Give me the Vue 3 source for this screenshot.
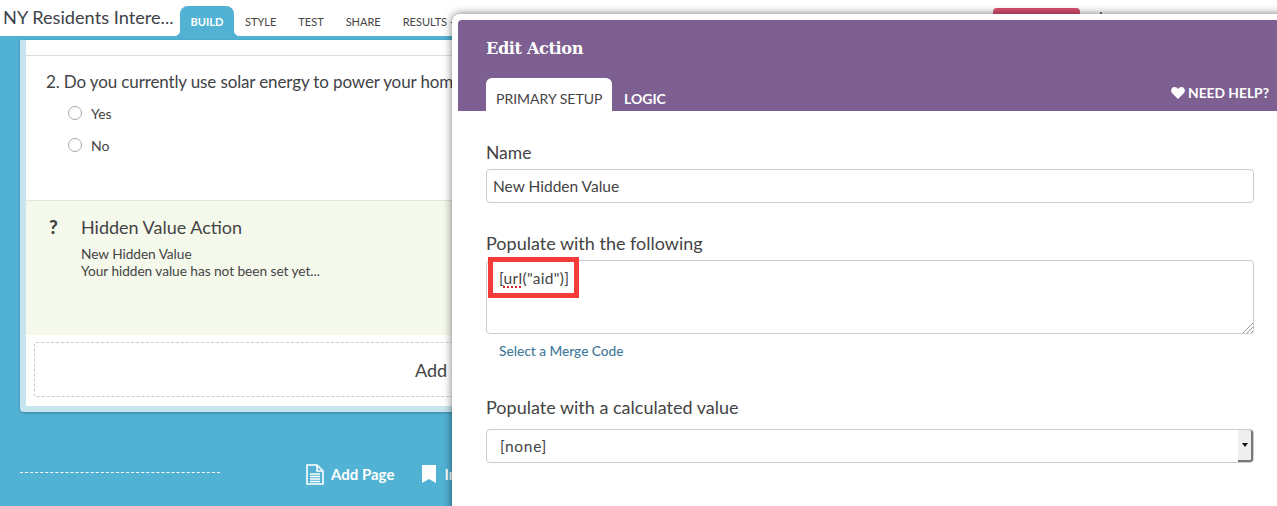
<script setup>
const nav = ['STYLE', 'TEST', 'SHARE', 'RESULTS']
</script>

<template>
  <div class="page">
    <header class="top">
      <div class="title">NY Residents Intere...</div>
      <nav class="nav">
        <span class="tab on">BUILD</span>
        <span v-for="n in nav" :key="n" class="tab">{{ n }}</span>
        <span class="caret">-</span>
      </nav>
      <div class="pink"></div>
      <svg class="gear" width="8" height="8" viewBox="0 0 8 8"><path d="M3 0h2v2h3v6H0V2h3z" fill="#777"/></svg>
    </header>

    <main class="card">
      <div class="inner">
        <div class="spacer"></div>
        <section class="question">
          <div class="qtext">2. Do you currently use solar energy to power your home?</div>
          <label class="opt"><i class="radio"></i>Yes</label>
          <label class="opt"><i class="radio"></i>No</label>
        </section>
        <section class="action">
          <div class="mark">?</div>
          <div>
            <div class="ahead">Hidden Value Action</div>
            <div class="aline first">New Hidden Value</div>
            <div class="aline">Your hidden value has not been set yet...</div>
          </div>
        </section>
        <div class="addwrap">
          <div class="addbox">Add Question</div>
        </div>
      </div>
    </main>

    <footer class="foot">
      <div class="dash"></div>
      <div class="flink first">
        <svg width="18" height="21" viewBox="0 0 18 21" fill="none" stroke="#fff" stroke-width="1.6">
          <path d="M1 1h10l6 6v13H1z"/>
          <path d="M11 1v6h6" />
          <path d="M4 10h10M4 12.500h10M4 15h10M4 17.500h10" stroke-width="1.400"/>
        </svg>
        <span>Add Page</span>
      </div>
      <div class="flink second">
        <svg width="14" height="18" viewBox="0 0 14 18"><path d="M0 0h14v18l-7-4-7 4z" fill="#fff"/></svg>
        <span>Insert Page</span>
      </div>
    </footer>

    <aside class="modal">
      <div class="mhead">
        <h2>Edit Action</h2>
        <div class="mtabs">
          <span class="mtab on">PRIMARY SETUP</span>
          <span class="mtab">LOGIC</span>
          <span class="help">
            <svg width="14" height="12" viewBox="0 0 14 12"><path d="M7 12 1 6C-1 3.500.6 0 3.600 0 5 0 6.200.7 7 2 7.800.7 9 0 10.400 0 13.400 0 15 3.500 13 6z" fill="#fff"/></svg>
            NEED HELP?
          </span>
        </div>
      </div>
      <div class="mbody">
        <div class="lab name">Name</div>
        <div class="field one">New Hidden Value</div>
        <div class="lab pop">Populate with the following</div>
        <div class="field area">
          <span class="code">[<span class="squig">url</span>("aid")]</span>
          <span class="redbox"></span>
          <svg class="grip" width="11" height="11" viewBox="0 0 11 11" stroke="#999" stroke-width="1"><path d="M11 1 1 11M11 5 5 11M11 9 9 11"/></svg>
        </div>
        <div class="merge">Select a Merge Code</div>
        <div class="lab calc">Populate with a calculated value</div>
        <div class="field sel">
          <span>[none]</span>
          <span class="arrow"><i></i></span>
        </div>
      </div>
    </aside>
  </div>
</template>

<style>
html, body { margin: 0; padding: 0; }
</style>

<style scoped>
.page {
  position: relative;
  width: 1277px;
  height: 506px;
  overflow: hidden;
  background: #51b2d3;
  font-family: Lato, "Open Sans", sans-serif;
  color: #444;
}
.top {
  display: flex;
  align-items: flex-end;
  height: 36px;
  background: #fff;
}
.title {
  width: 176px;
  padding-left: 3px;
  box-sizing: border-box;
  align-self: flex-start;
  margin-top: 6px;
  font-size: 18.200px;
  line-height: 22px;
  color: #3d4248;
  white-space: nowrap;
}
.nav {
  display: flex;
  align-items: flex-end;
  margin-left: 4px;
}
.tab {
  height: 30px;
  line-height: 32px;
  padding: 0 11px;
  font-size: 11px;
  color: #444;
  position: relative;
}
.tab.on {
  width: 54px;
  box-sizing: border-box;
  text-align: center;
  padding: 0;
  font-weight: 700;
  color: #fff;
  background: #51b2d3;
  border-radius: 8px 8px 0 0;
}
.tab.on::before, .tab.on::after {
  content: "";
  position: absolute;
  bottom: 0;
  width: 6px;
  height: 6px;
}
.tab.on::before { left: -6px; background: radial-gradient(circle at 0 0, #fff 6px, #51b2d3 6.500px); }
.tab.on::after { right: -6px; background: radial-gradient(circle at 100% 0, #fff 6px, #51b2d3 6.500px); }
.caret { font-size: 11px; line-height: 32px; height: 30px; margin-left: -8px; }
.pink {
  position: absolute;
  left: 993px;
  top: 8px;
  width: 87px;
  height: 20px;
  background: #d9506f;
  border-radius: 4px;
}
.gear { position: absolute; left: 1097px; top: 12px; }

.card {
  margin: 4px 0 0 20px;
  width: 1237px;
  height: 372px;
  box-sizing: border-box;
  background: #c7e5ef;
  border-radius: 0 0 4px 4px;
  padding: 0 6px 6px;
  box-shadow: 0 1px 3px rgba(0, 0, 0, .25);
}
.inner {
  background: #fff;
  height: 366px;
  display: flex;
  flex-direction: column;
}
.spacer { height: 15px; border-bottom: 1px solid #ddd; flex: none; }
.question { height: 145px; flex: none; padding: 15px 0 0 20px; box-sizing: border-box; border-bottom: 1px solid #e2e4de; }
.qtext { font-size: 17px; line-height: 22px; color: #3f4347; white-space: nowrap; letter-spacing: -.13px; }
.opt { display: flex; align-items: center; height: 32px; margin-left: 22px; font-size: 14px; color: #444; }
.opt:first-of-type { margin-top: 4px; }
.radio {
  width: 12px; height: 12px; border: 1px solid #aaa; border-radius: 50%;
  background: #fff; margin-right: 9px; flex: none;
}
.action {
  height: 134px; flex: none; background: #f5f9ec; box-sizing: border-box;
  display: flex; padding: 15px 0 0 23px;
}
.mark { width: 32px; font-weight: 900; font-size: 19px; line-height: 22px; color: #444; }
.ahead { font-size: 18px; line-height: 22px; color: #444; }
.aline { font-size: 13.700px; line-height: 17px; color: #444; letter-spacing: -.05px; }
.aline.first { margin-top: 7px; }
.addwrap { padding: 7px 8px 0; }
.addbox {
  height: 55px; box-sizing: border-box;
  border: 1px dashed #ccc; border-radius: 2px;
  padding-left: 380px; line-height: 55px; font-size: 18px; color: #444;
}

.foot { display: flex; align-items: center; height: 26px; margin-top: 49px; color: #fff; }
.dash { margin-left: 20px; width: 200px; border-top: 1px dashed #fff; margin-top: -4px; flex: none; }
.flink { display: flex; align-items: center; font-size: 15px; font-weight: 700; white-space: nowrap; }
.flink.first { margin-left: 86px; gap: 7px; }
.flink.second { margin-left: 28px; gap: 8px; }

.modal {
  position: absolute;
  left: 452px;
  top: 14px;
  width: 860px;
  height: 540px;
  box-sizing: border-box;
  background: #fff;
  border-radius: 8px 0 0 0;
  padding: 6px 0 0 6px;
  box-shadow: 0 0 8px rgba(0, 0, 0, .55);
}
.mhead {
  height: 91px;
  box-sizing: border-box;
  background: #7d5f91;
  border-radius: 4px 0 0 0;
  padding: 0 0 0 28px;
  display: flex;
  flex-direction: column;
  justify-content: space-between;
  color: #fff;
}
h2 {
  margin: 18px 0 0;
  font-family: "DejaVu Serif", "Liberation Serif", serif;
  font-size: 16.200px;
  line-height: 22px;
  font-weight: 700;
  letter-spacing: -.4px;
  color: #fff;
}
.mtabs { display: flex; align-items: flex-end; width: 783px; position: relative; }
.mtab { font-size: 14px; font-weight: 700; line-height: 33px; height: 33px; padding: 4px 0 0 12px; box-sizing: border-box; }
.mtab.on {
  width: 126px; padding: 4px 0 0 10px;
  background: #fff; color: #444; font-weight: 400; border-radius: 6px 6px 0 0; white-space: nowrap;
}
.help {
  position: absolute; right: 0; bottom: 10px;
  display: flex; align-items: center; gap: 3px;
  font-size: 13.800px; line-height: 16px; font-weight: 700; white-space: nowrap;
}
.mbody { padding-left: 28px; position: relative; }
.lab { font-size: 18px; line-height: 22px; color: #444; }
.lab.name { margin-top: 31px; font-size: 17.500px; }
.lab.pop { margin-top: 29px; }
.lab.calc { margin-top: 36px; }
.field {
  width: 768px; box-sizing: border-box;
  border: 1px solid #ccc; border-radius: 4px;
  font-size: 15.500px; color: #444; background: #fff;
}
.field.one { height: 34px; line-height: 32px; margin-top: 5px; padding-left: 6px; }
.field.area { height: 74px; margin-top: 6px; position: relative; padding: 7px 0 0 12px; line-height: 20px; }
.code { white-space: nowrap; letter-spacing: .3px; }
.squig { text-decoration: underline dotted #e02020; text-decoration-thickness: 1.500px; text-underline-offset: 2px; }
.redbox {
  position: absolute; left: 1px; top: -4px; width: 91px; height: 41px;
  box-sizing: border-box; border: 5px solid #f53a3a;
}
.grip { position: absolute; right: 0; bottom: 0; }
.merge { margin: 8px 0 0 13px; font-size: 13.700px; line-height: 18px; color: #43799a; font-weight: 500; }
.field.sel {
  height: 34px; margin-top: 11px; position: relative;
  padding-left: 13px; line-height: 32px; letter-spacing: .7px;
}
.arrow {
  position: absolute; right: 0; top: 0; bottom: 0; width: 15px;
  background: #efefef; border-right: 2px solid #777; border-bottom: 2px solid #777;
  border-radius: 0 3px 3px 0; box-sizing: border-box;
  display: flex; align-items: center; justify-content: center;
}
.arrow i { width: 0; height: 0; border: 3px solid transparent; border-top: 4px solid #111; border-bottom: 0; }
</style>
